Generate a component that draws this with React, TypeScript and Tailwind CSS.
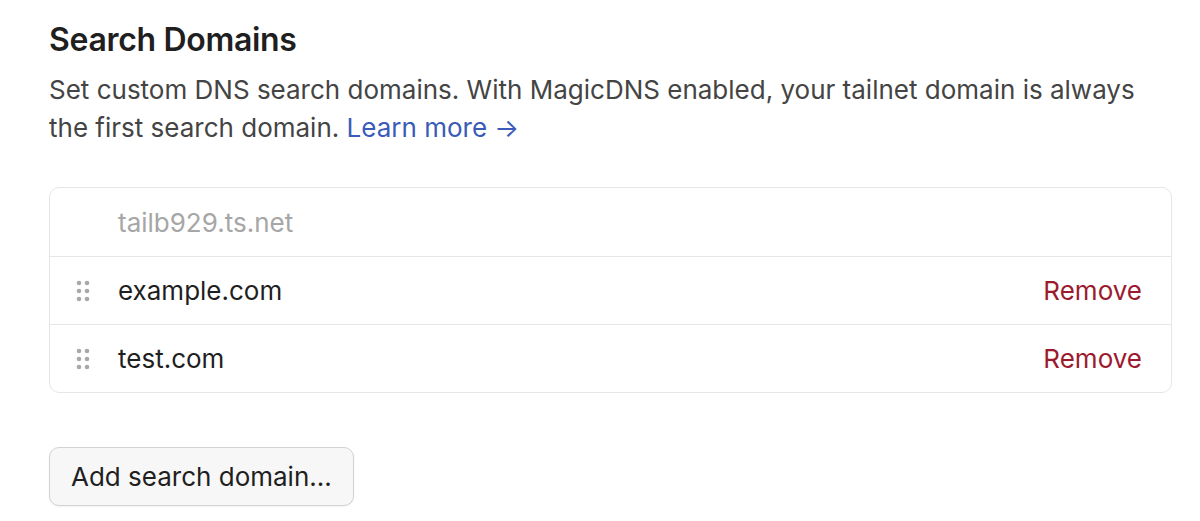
import React, { ReactElement } from 'react';

const domains = ['example.com', 'test.com'];

export default function App(): ReactElement {
  return (
    <div
      className="min-h-[521px] bg-white pl-[49px] pr-[28px] pt-[20px] text-[#3b3b3b]"
      style={{ fontFamily: 'Inter, "Noto Sans", sans-serif' }}
    >
      <h2 className="text-[32px] font-semibold leading-[40px] tracking-[-0.01em] text-[#1f1f1f]">
        Search Domains
      </h2>
      <p className="mt-[11px] text-[26px] leading-[38px] text-[#444]">
        Set custom DNS search domains. With MagicDNS enabled, your tailnet domain is always
        the first search domain.{' '}
        <a href="#" className="text-[#3b5bb9]">
          Learn more →
        </a>
      </p>

      <div className="mt-[40px] rounded-[10px] border border-[#e6e6e6]">
        <div className="flex h-[68px] items-center pl-[68px] text-[26px] text-[#a6a6a6]">
          tailb929.ts.net
        </div>
        {domains.map((d) => (
          <DomainRow key={d} name={d} />
        ))}
      </div>

      <button className="mt-[54px] h-[59px] rounded-[10px] border border-[#d2d2d2] bg-[#f7f7f7] px-[21px] text-[26px] text-[#1f1f1f] shadow-[0_1px_2px_rgba(0,0,0,0.05)]">
        Add search domain...
      </button>
    </div>
  );
}

function DomainRow(props: { name: string }): ReactElement {
  return (
    <div className="flex h-[68px] items-center border-t border-[#e6e6e6] pl-[26px] pr-[29px]">
      <DragHandle />
      <span className="ml-[28px] flex-1 text-[26px] text-[#1f1f1f]">{props.name}</span>
      <button className="text-[26px] text-[#9c1a2e]">Remove</button>
    </div>
  );
}

function DragHandle(): ReactElement {
  return (
    <svg width="14" height="22" viewBox="0 0 14 22" className="fill-[#a8a8a8]">
      <circle cx="3" cy="3" r="2.3" />
      <circle cx="11" cy="3" r="2.3" />
      <circle cx="3" cy="11" r="2.3" />
      <circle cx="11" cy="11" r="2.3" />
      <circle cx="3" cy="19" r="2.3" />
      <circle cx="11" cy="19" r="2.3" />
    </svg>
  );
}
